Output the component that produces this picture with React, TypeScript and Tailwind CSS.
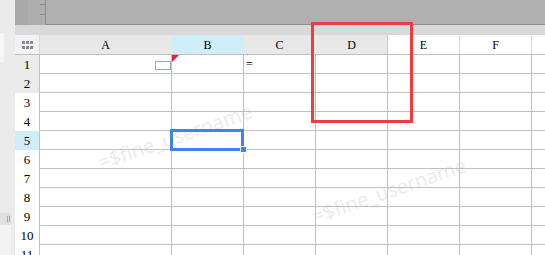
import React from "react";

const serif = { fontFamily: '"Liberation Serif", "DejaVu Serif", serif' };

function HeaderCell({ label, className }: { label: string; className: string }) {
  return (
    <div
      className={`h-full flex items-center justify-center text-[12px] text-black border-r shrink-0 ${className}`}
      style={serif}
    >
      {label}
    </div>
  );
}

export default function App() {
  const rows = [1, 2, 3, 4, 5, 6, 7, 8, 9, 10, 11];
  const dataCols = [
    "w-[132px]",
    "w-[72px]",
    "w-[72px]",
    "w-[72px]",
    "w-[72px]",
    "w-[72px]",
  ];
  const rowHeadBg = (r: number) =>
    r === 5 ? "bg-[#cfeefa]" : r <= 2 ? "bg-[#ebebeb]" : "bg-white";

  return (
    <div className="relative z-0 w-[545px] h-[255px] overflow-hidden flex bg-white">
      {/* left strip */}
      <div className="w-[15px] shrink-0 bg-[#ebebeb] flex flex-col">
        <div className="h-[33px]" />
        <div className="h-[29px] w-[4px] bg-[#f6f6f6]" />
        <div className="h-[151px]" />
        <div className="h-[12px] w-[11px] bg-[#e0e0e0] flex justify-end items-center pr-[1px] gap-[1px]">
          <div className="w-px h-[6px] bg-[#a8a8a8]" />
          <div className="w-px h-[6px] bg-[#a8a8a8]" />
        </div>
        <div className="flex-1 w-[11px] bg-[#f3f3f3]" />
      </div>

      <div className="flex-1 flex flex-col">
        {/* top bar */}
        <div className="h-[25px] flex shrink-0">
          <div className="w-[13px] bg-[#a9a9a9]" />
          <div className="w-[17px] bg-[#aeaeae] flex flex-col items-end pt-[4px] gap-[9px]">
            <div className="w-[5px] h-px bg-[#8a8a8a]" />
            <div className="w-[5px] h-px bg-[#8a8a8a]" />
          </div>
          <div className="flex-1 bg-[#b0b0b0] border-l border-b border-[#8e8e8e]" />
        </div>
        {/* band */}
        <div className="h-[10px] bg-[#d9d9db] shrink-0" />
        {/* column header */}
        <div className="h-[20px] flex shrink-0 border-b border-[#c0c0c0]">
          <div className="w-[25px] h-full shrink-0 bg-[#f2f2f4] border-r border-[#d8d8d8] flex items-center justify-center">
            <div className="grid grid-cols-3 gap-x-[1px] gap-y-[2px]">
              {[0, 1, 2, 3, 4, 5].map((i) => (
                <div key={i} className="w-[3px] h-[3px] bg-[#8c8c8c]" />
              ))}
            </div>
          </div>
          <HeaderCell label="A" className="w-[132px] bg-[#e8e8e8] border-[#e8e8e8]" />
          <HeaderCell label="B" className="w-[72px] bg-[#cfeefa] border-[#e6e6e6]" />
          <HeaderCell label="C" className="w-[72px] bg-[#e8e8e8] border-[#f0f0f0]" />
          <HeaderCell label="D" className="w-[72px] bg-[#e8e8e8] border-[#c8c8c8]" />
          <HeaderCell label="E" className="w-[72px] bg-white border-[#dcdcdc]" />
          <HeaderCell label="F" className="w-[72px] bg-white border-[#dcdcdc]" />
          <div className="flex-1 bg-white" />
        </div>
        {/* rows */}
        {rows.map((r) => (
          <div key={r} className="h-[19px] flex shrink-0">
            <div
              className={`w-[25px] h-full shrink-0 border-r border-[#c0c0c0] flex items-center justify-center text-[13px] text-black ${rowHeadBg(r)}`}
              style={serif}
            >
              {r}
            </div>
            {dataCols.map((w, ci) => (
              <div
                key={ci}
                className={`${w} h-full shrink-0 border-r border-b border-[#c0c0c0] flex items-center text-[12px] text-black`}
                style={serif}
              >
                {r === 1 && ci === 2 ? <span className="pl-[2px]">=</span> : null}
              </div>
            ))}
            <div className="flex-1 h-full border-b border-[#c0c0c0]" />
          </div>
        ))}
      </div>

      {/* watermarks */}
      <div
        className="absolute -z-10 left-[175px] top-[137px] -translate-x-1/2 -translate-y-1/2 -rotate-[19deg] text-[20px] text-[#ebebeb] whitespace-nowrap"
        style={{ fontFamily: '"Open Sans", sans-serif' }}
      >
        =$fine_username
      </div>
      <div
        className="absolute -z-10 left-[389px] top-[191px] -translate-x-1/2 -translate-y-1/2 -rotate-[19deg] text-[20px] text-[#ebebeb] whitespace-nowrap"
        style={{ fontFamily: '"Open Sans", sans-serif' }}
      >
        =$fine_username
      </div>

      {/* A1 small box */}
      <div className="absolute left-[155px] top-[61px] w-[16px] h-[9px] border border-[#9aabc6] bg-white" />
      {/* B1 red triangle */}
      <svg className="absolute left-[172px] top-[55px]" width="7" height="7" viewBox="0 0 7 7">
        <polygon points="0,0 7,0 0,7" fill="#f5143c" />
      </svg>
      {/* selection B5 */}
      <div className="absolute left-[170px] top-[129px] w-[74px] h-[22px] border-[3px] border-[#3a86ee]" />
      <div className="absolute left-[240px] top-[146px] w-[7px] h-[7px] bg-[#3a86ee] border border-white" />

      {/* red highlight box */}
      <div className="absolute left-[311px] top-[22px] w-[102px] h-[101px] border-[3px] border-[#f03c3c]" />
    </div>
  );
}
